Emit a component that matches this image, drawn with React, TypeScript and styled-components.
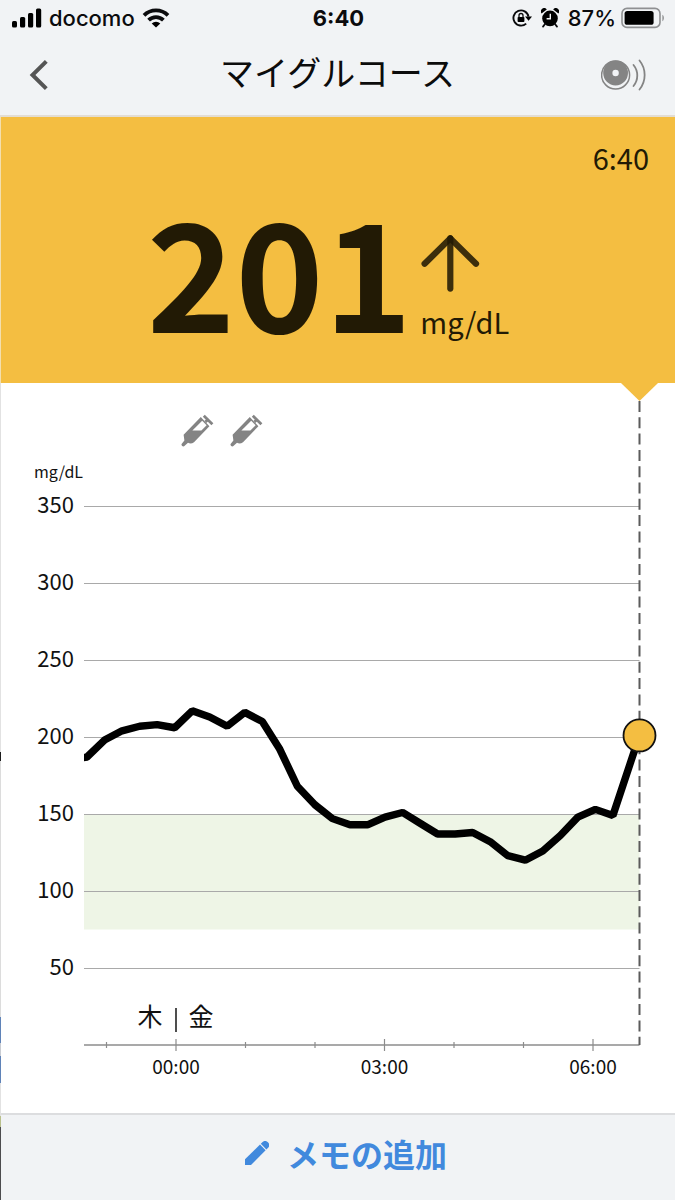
import React from "react";
import styled, { createGlobalStyle } from "styled-components";

const colors = {
  bar: "#f1f3f5",
  rule: "#dcdddf",
  high: "#f4be41",
  ink: "#221a05",
  grid: "#a9a9a9",
  target: "#eef5e6",
  icon: "#848484",
  link: "#4189dd",
};

const sans = `"Noto Sans CJK JP", "Noto Sans", sans-serif`;

const GlobalStyle = createGlobalStyle`
  * { box-sizing: border-box; }
  body { margin: 0; background: #fff; font-family: ${sans}; color: #111; }
  button { font: inherit; border: 0; padding: 0; background: none; cursor: pointer; }
`;

const Screen = styled.div`
  display: flex;
  flex-direction: column;
  min-height: 100vh;
  background: ${colors.bar};
`;

const TopBar = styled.header`
  background: ${colors.bar};
  border-bottom: 2px solid #e3ddd3;
`;

const StatusBar = styled.div`
  display: grid;
  grid-template-columns: 1fr auto 1fr;
  align-items: center;
  height: 36px;
  padding: 0 10px 0 12px;
  font-family: Inter, sans-serif;
  font-size: 22px;
  line-height: 36px;
  color: #0b0b0d;
`;

const StatusGroup = styled.div<{ $end?: boolean }>`
  display: flex;
  align-items: center;
  justify-content: ${(p) => (p.$end ? "flex-end" : "flex-start")};
  gap: ${(p) => (p.$end ? 9 : 7)}px;
  font-weight: 500;
`;

const BatteryStatus = styled.span`
  display: flex;
  align-items: center;
  gap: 5px;
`;

const Clock = styled.time`
  font-weight: 700;
`;

const NavBar = styled.div`
  display: grid;
  grid-template-columns: 1fr auto 1fr;
  align-items: center;
  height: 79px;
  padding: 0 28px 2px;
`;

const NavButton = styled.button<{ $end?: boolean }>`
  display: flex;
  justify-self: ${(p) => (p.$end ? "end" : "start")};
`;

const Title = styled.h1`
  margin: 0;
  font-size: 34px;
  line-height: 72px;
  font-weight: 400;
  color: #0c0c0c;
  align-self: start;
`;

const Body = styled.div`
  display: flex;
  flex-direction: column;
  flex: 1;
  padding-left: 1px;
  background: linear-gradient(
    #f3dfae 0 266px,
    #e2e2e2 266px 635px,
    #1c1c1c 635px 644px,
    #dcdcdc 644px 900px,
    #5f83b8 900px 926px,
    #c9ccd2 926px 939px,
    #5f83b8 939px 966px,
    #e2e2e2 966px 999px,
    #b9c08c 999px 1010px,
    #4c4c4e 1010px
  );
`;

const Hero = styled.section`
  padding: 24px 26px 55px;
  background: ${colors.high};
  color: ${colors.ink};
`;

const ReadingTime = styled.time`
  display: block;
  text-align: right;
  font-size: 29px;
  line-height: 32px;
`;

const Reading = styled.div`
  display: flex;
  justify-content: center;
  gap: 8px;
  margin-top: 35px;
  padding-right: 20px;
`;

const Value = styled.strong`
  font-size: 150px;
  line-height: 120px;
  font-weight: 700;
`;

const Trend = styled.div`
  display: flex;
  flex-direction: column;
  gap: 13px;
  padding-top: 27px;
`;

const Unit = styled.span`
  font-size: 29px;
  line-height: 32px;
  height: 16px;
`;

const ChartPanel = styled.section`
  flex: 1;
  background: #fff;
`;

const ChartSvg = styled.svg`
  display: block;
  width: 100%;
  font-family: ${sans};
  fill: #111;
`;

const Footer = styled.footer`
  border-top: 2px solid ${colors.rule};
  background: ${colors.bar};
`;

const MemoButton = styled.button`
  && {
    display: flex;
    align-items: center;
    justify-content: center;
    gap: 18px;
    width: 100%;
    height: 85px;
    padding: 0 0 10px 16px;
    color: ${colors.link};
    font-size: 32px;
    font-weight: 700;
    line-height: 48px;
  }
`;

const SignalIcon = () => (
  <svg width="30" height="20" viewBox="0 0 30 20" aria-hidden="true">
    <rect x="0" y="13" width="5" height="6.4" rx="1.5" />
    <rect x="8" y="9" width="5.2" height="10.4" rx="1.5" />
    <rect x="16" y="5" width="5.2" height="14.4" rx="1.5" />
    <rect x="24" y="0.4" width="5.2" height="19" rx="1.5" />
  </svg>
);

const WifiIcon = () => (
  <svg width="28" height="20" viewBox="0 0 28 20" aria-hidden="true">
    <g fill="none" stroke="currentColor" strokeWidth="3.8">
      <path d="M2 7.4a17 17 0 0 1 24 0" />
      <path d="M6.6 12.2a10.5 10.5 0 0 1 14.8 0" />
    </g>
    <path d="M14 19.6l-4.3-4.1a6 6 0 0 1 8.6 0z" />
  </svg>
);

const RotationLockIcon = () => (
  <svg width="20" height="20" viewBox="0 0 20 20" aria-hidden="true">
    <path d="M14.2 15.6A7.6 7.6 0 1 1 16.5 8.6" fill="none" stroke="currentColor" strokeWidth="1.9" />
    <path d="M13 8.4h7l-3.4 4.4z" />
    <rect x="5.6" y="9" width="6.8" height="5" rx=".8" />
    <path d="M7 9.4V7.5a2 2 0 0 1 4 0v1.9" fill="none" stroke="currentColor" strokeWidth="1.3" />
  </svg>
);

const AlarmIcon = () => (
  <svg width="18" height="20" viewBox="0 0 18 20" aria-hidden="true">
    <circle cx="9" cy="10.4" r="7.8" />
    <path d="M.6 5.4A3.1 3.1 0 0 1 5.8 1.4zM17.4 5.4A3.1 3.1 0 0 0 12.2 1.4z" />
    <path d="M4 16l-2 2.6M14 16l2 2.6" stroke="currentColor" strokeWidth="1.8" strokeLinecap="round" />
    <path d="M9.3 5.8v4.9H5.6" fill="none" stroke={colors.bar} strokeWidth="1.4" />
  </svg>
);

const BatteryIcon = () => (
  <svg width="44" height="22" viewBox="0 0 44 22" aria-hidden="true">
    <rect x="1" y="1.4" width="38" height="19" rx="5" fill="none" stroke="#8f9092" strokeWidth="1.6" />
    <rect x="3.6" y="4" width="29" height="13.8" rx="2.6" />
    <path d="M41.4 7.8c2 1 2 5.4 0 6.4z" fill="#8f9092" />
  </svg>
);

const BackIcon = () => (
  <svg width="22" height="32" viewBox="0 0 22 32" aria-hidden="true">
    <path d="M18.3 2.3L4.5 16l13.8 13.7" fill="none" stroke="#555" strokeWidth="4" />
  </svg>
);

const SensorIcon = () => (
  <svg width="46" height="34" viewBox="0 0 46 34" aria-hidden="true">
    <circle cx="14.6" cy="17" r="14" fill="none" stroke={colors.icon} strokeWidth="1.5" />
    <circle cx="14.6" cy="15" r="12.4" fill={colors.icon} />
    <circle cx="14.6" cy="15" r="3.2" fill={colors.bar} />
    <g fill="none" stroke={colors.icon} strokeWidth="1.8" strokeLinecap="round">
      <path d="M32.5 7a16.5 16.5 0 0 1 0 21" />
      <path d="M38.5 2.5a23 23 0 0 1 0 29" />
    </g>
  </svg>
);

const ArrowUpIcon = () => (
  <svg width="60" height="57" viewBox="-1 0 60 57" role="img" aria-label="上昇中">
    <g fill="none" stroke={colors.ink} strokeOpacity=".88" strokeWidth="6.2" strokeLinecap="round">
      <path d="M29.3 3.4V53.6" />
      <path d="M3.6 28.8L29.3 3.4L55 28.8" strokeLinejoin="round" />
    </g>
  </svg>
);

const PencilIcon = () => (
  <svg width="24" height="24" viewBox="0 0 24 24" fill={colors.link} aria-hidden="true">
    <path d="M0 24v-5.8L15 3.6l5.6 5.6L6 24z" />
    <path d="M15.8 2.8l1.5-1.5a3.95 3.95 0 0 1 5.6 5.6l-1.5 1.5z" />
  </svg>
);

const Syringe = ({ x }: { x: number }) => (
  <g transform={`translate(${x} 32)`} fill={colors.icon}>
    <path d="M19.8 2L28.4 11.2L13 27.2Q10 29.2 7 27.8L2.8 31.6Q.4 31.6 .4 29.2L3.4 25.4L2.6 19.8Z" />
    <path d="M11.4 15.6L21.2 5.8L25.6 10.2L20.4 15.6Z" fill="#fff" />
    <path
      d="M22.8 .8L31.4 9.2M24.4 6.8L27.6 4.2"
      fill="none"
      stroke={colors.icon}
      strokeWidth="2.8"
    />
  </g>
);

// Chart geometry, in chart units
const LEFT = 84;
const NOW = 639.5;
const AXIS = 662;
const yOf = (mgdl: number) => 585 - (mgdl - 50) * 1.54;
const xOfHour = (h: number) => 176 + h * 69.5;

const levels = [350, 300, 250, 200, 150, 100, 50];
const hours = [-1, 0, 1, 2, 3, 4, 5, 6];
const readings = [
  187, 198, 204, 207, 208, 206, 217, 213, 207, 216, 210, 192, 168, 156, 147, 143, 143, 148, 151,
  144, 137, 137, 138, 132, 123, 120, 126, 136, 148, 153, 149,
];
const current = 201;

const line = [
  `${LEFT - 1},${yOf(186.5)}`,
  ...readings.map((v, i) => `${87 + i * 17.53},${yOf(v)}`),
  `${NOW},${yOf(current)}`,
].join(" ");

const GlucoseChart = () => (
  <ChartSvg viewBox="1 0 674 730" role="img" aria-label="グルコース値の推移">
    <Syringe x={181} />
    <Syringe x={230} />
    <text x="83" y="95" fontSize="16" textAnchor="end">mg/dL</text>

    <rect x={LEFT} y={yOf(150)} width={NOW - LEFT} height={yOf(75) - yOf(150)} fill={colors.target} />
    {levels.map((v) => (
      <g key={v}>
        <line x1={LEFT} x2={NOW} y1={yOf(v) + 0.5} y2={yOf(v) + 0.5} stroke={colors.grid} />
        <text x="74" y={yOf(v) + 7} fontSize="22" textAnchor="end">{v}</text>
      </g>
    ))}

    <line x1={LEFT} x2={NOW} y1={AXIS} y2={AXIS} stroke="#8c8c8c" strokeWidth="1.3" />
    {hours.map((h) => {
      const major = h % 3 === 0;
      const r = major ? 6 : 3;
      return (
        <g key={h}>
          <line x1={xOfHour(h)} x2={xOfHour(h)} y1={AXIS - r} y2={AXIS + r} stroke="#8c8c8c" strokeWidth="1.2" />
          {major && (
            <text x={xOfHour(h)} y="691" fontSize="19" textAnchor="middle">{`0${h}:00`}</text>
          )}
        </g>
      );
    })}
    <text x="150" y="643" fontSize="25" textAnchor="middle">木</text>
    <line x1="176" x2="176" y1="625" y2="649" stroke="#222" strokeWidth="1.6" />
    <text x="201" y="643" fontSize="25" textAnchor="middle">金</text>

    <line x1={NOW} x2={NOW} y1="18" y2={AXIS} stroke="#5b5b5b" strokeWidth="2" strokeDasharray="11 5.3" />
    <path d={`M${NOW - 18.5} 0h37L${NOW} 18z`} fill={colors.high} />

    <clipPath id="plot">
      <rect x={LEFT} y="100" width={NOW - LEFT} height={AXIS - 100} />
    </clipPath>
    <polyline
      points={line}
      clipPath="url(#plot)"
      fill="none"
      stroke="#000"
      strokeWidth="7.4"
      strokeLinejoin="bevel"
    />
    <circle cx={NOW} cy={yOf(current)} r="16" fill={colors.high} stroke="#111" strokeWidth="1.8" />
  </ChartSvg>
);

export default function App() {
  return (
    <Screen>
      <GlobalStyle />
      <TopBar>
        <StatusBar>
          <StatusGroup>
            <SignalIcon />
            <span>docomo</span>
            <WifiIcon />
          </StatusGroup>
          <Clock>6:40</Clock>
          <StatusGroup $end>
            <RotationLockIcon />
            <AlarmIcon />
            <BatteryStatus>
              87%
              <BatteryIcon />
            </BatteryStatus>
          </StatusGroup>
        </StatusBar>
        <NavBar>
          <NavButton aria-label="戻る">
            <BackIcon />
          </NavButton>
          <Title>マイグルコース</Title>
          <NavButton $end aria-label="センサー">
            <SensorIcon />
          </NavButton>
        </NavBar>
      </TopBar>
      <Body>
        <Hero>
          <ReadingTime>6:40</ReadingTime>
          <Reading>
            <Value>{current}</Value>
            <Trend>
              <ArrowUpIcon />
              <Unit>mg/dL</Unit>
            </Trend>
          </Reading>
        </Hero>
        <ChartPanel>
          <GlucoseChart />
        </ChartPanel>
        <Footer>
          <MemoButton>
            <PencilIcon />
            メモの追加
          </MemoButton>
        </Footer>
      </Body>
    </Screen>
  );
}
